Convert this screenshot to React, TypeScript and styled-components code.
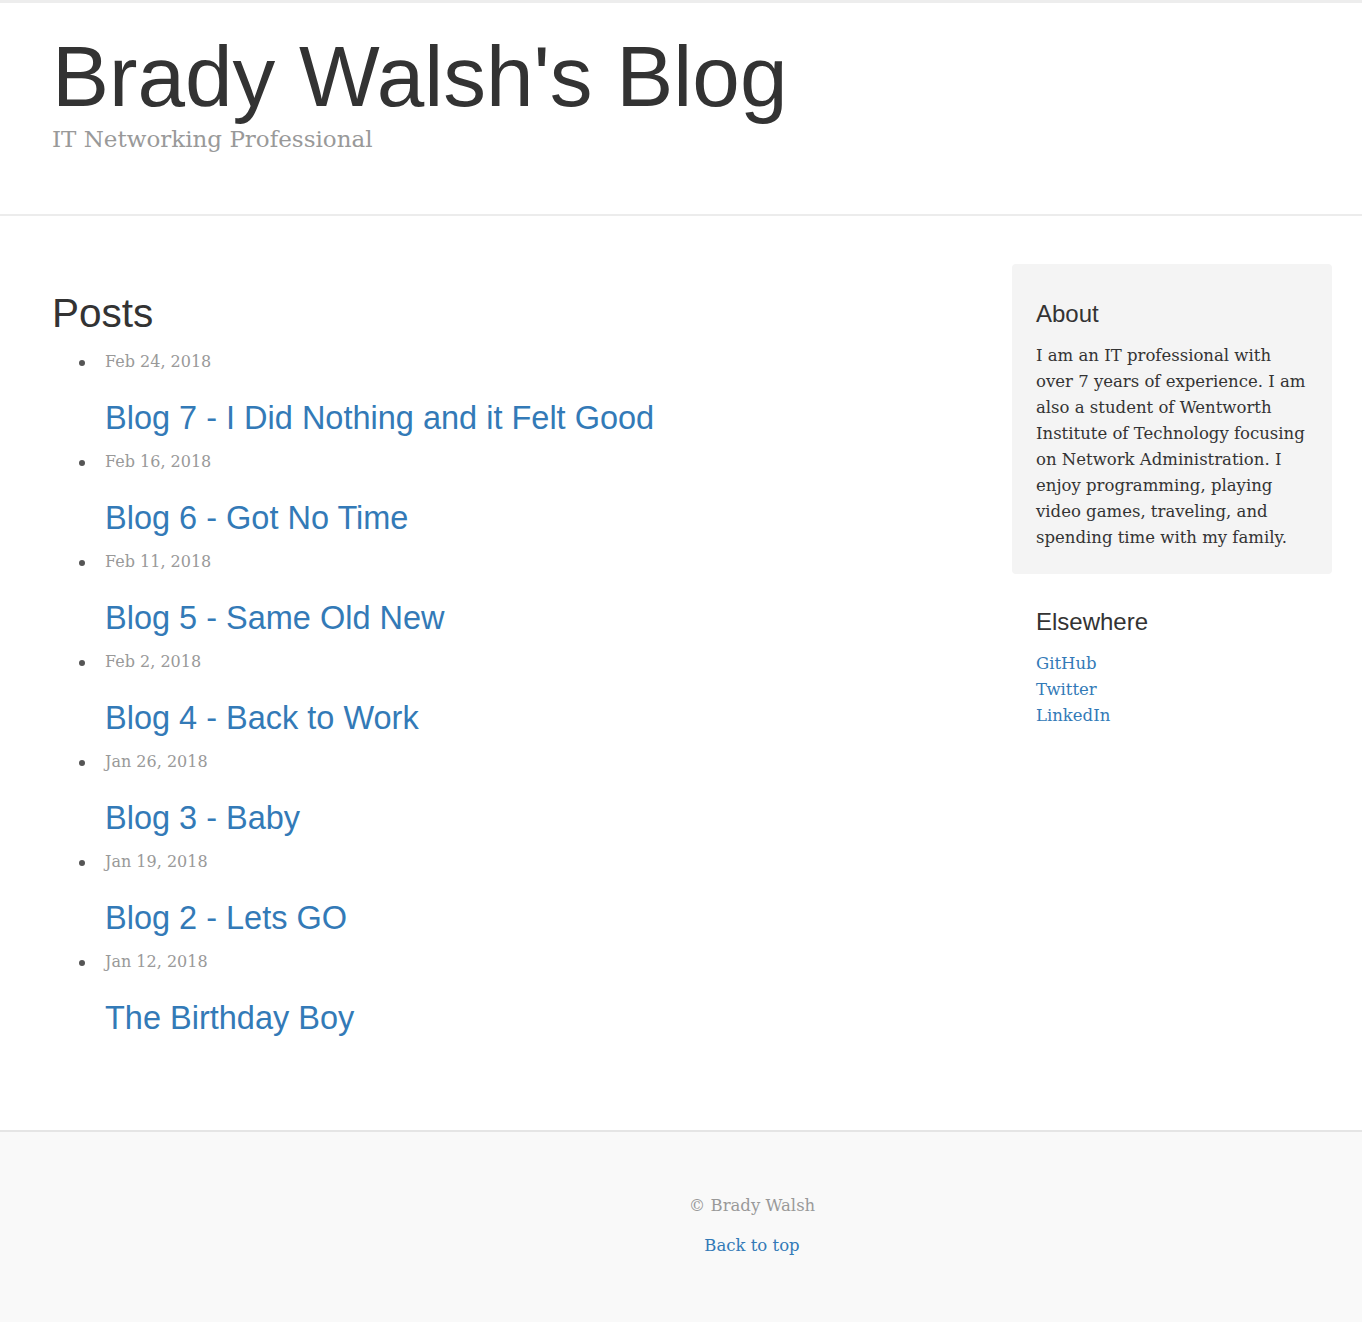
import React from "react";
import styled, { createGlobalStyle } from "styled-components";

const GlobalStyle = createGlobalStyle`
  html, body {
    margin: 0;
    padding: 0;
    background: #ffffff;
  }
  body {
    font-family: "DejaVu Serif", "Liberation Serif", serif;
    color: #333333;
    -webkit-font-smoothing: antialiased;
  }
  * { box-sizing: border-box; }
`;

const sans = `"Liberation Sans", Arial, Helvetica, sans-serif`;
const serif = `"DejaVu Serif", "Liberation Serif", Georgia, serif`;

const Page = styled.div`
  display: flex;
  flex-direction: column;
  min-height: 1322px;
  border-top: 3px solid #ededed;
`;

const Header = styled.header`
  padding: 27px 30px 61px 52px;
  border-bottom: 2px solid #ececec;
`;

const BlogTitle = styled.h1`
  margin: 0;
  font-family: ${sans};
  font-weight: 400;
  font-size: 85.5px;
  line-height: 93.5px;
  color: #333333;
`;

const Tagline = styled.p`
  margin: 2px 0 0;
  font-family: ${serif};
  font-size: 23px;
  line-height: 1.2;
  color: #999999;
`;

const Main = styled.main`
  flex: 1;
  display: grid;
  grid-template-columns: 1fr 320px;
  column-gap: 40px;
  align-items: start;
  padding: 48px 30px 81px 52px;
`;

const PostsColumn = styled.section``;

const SectionTitle = styled.h2`
  margin: 27px 0 0;
  font-family: ${sans};
  font-weight: 400;
  font-size: 40.5px;
  line-height: 44px;
  color: #333333;
`;

const PostList = styled.ul`
  list-style: none;
  margin: 14px 0 0;
  padding: 0 0 0 53px;
`;

const PostItem = styled.li`
  position: relative;
  &::before {
    content: "";
    position: absolute;
    left: -26px;
    top: 11px;
    width: 6px;
    height: 6px;
    border-radius: 50%;
    background: #555555;
  }
`;

const PostDate = styled.span`
  display: block;
  font-family: ${serif};
  font-size: 16px;
  line-height: 26px;
  color: #999999;
`;

const PostTitle = styled.h3`
  margin: 26px 0 13px;
  font-family: ${sans};
  font-weight: 400;
  font-size: 32.5px;
  line-height: 35px;
`;

const Link = styled.a`
  color: #337ab7;
  text-decoration: none;
`;

const Sidebar = styled.aside`
  display: flex;
  flex-direction: column;
  gap: 35px;
`;

const Module = styled.div<{ $inset?: boolean }>`
  padding: ${(p) => (p.$inset ? "37px 24px 23px" : "0 24px")};
  background: ${(p) => (p.$inset ? "#f4f4f4" : "transparent")};
  border-radius: 4px;
`;

const ModuleTitle = styled.h4`
  margin: 0;
  font-family: ${sans};
  font-weight: 400;
  font-size: 24px;
  line-height: 26px;
  color: #333333;
`;

const ModuleText = styled.p`
  margin: 16px 0 0;
  font-family: ${serif};
  font-size: 16.5px;
  line-height: 26px;
  color: #333333;
`;

const LinkList = styled.ol`
  list-style: none;
  margin: 16px 0 0;
  padding: 0;
  font-family: ${serif};
  font-size: 16.5px;
  line-height: 26px;
`;

const Footer = styled.footer`
  padding: 61px 0 63px 142px;
  background: #f9f9f9;
  border-top: 2px solid #e5e5e5;
  text-align: center;
  font-family: ${serif};
  font-size: 16.5px;
  line-height: 26px;
  color: #999999;
`;

const FooterLine = styled.p`
  margin: 0;
  & + & {
    margin-top: 14px;
  }
`;

const posts = [
  { date: "Feb 24, 2018", title: "Blog 7 - I Did Nothing and it Felt Good" },
  { date: "Feb 16, 2018", title: "Blog 6 - Got No Time" },
  { date: "Feb 11, 2018", title: "Blog 5 - Same Old New" },
  { date: "Feb 2, 2018", title: "Blog 4 - Back to Work" },
  { date: "Jan 26, 2018", title: "Blog 3 - Baby" },
  { date: "Jan 19, 2018", title: "Blog 2 - Lets GO" },
  { date: "Jan 12, 2018", title: "The Birthday Boy" },
];

export default function App() {
  return (
    <>
      <GlobalStyle />
      <Page>
        <Header>
          <BlogTitle>Brady Walsh's Blog</BlogTitle>
          <Tagline>IT Networking Professional</Tagline>
        </Header>
        <Main>
          <PostsColumn>
            <SectionTitle>Posts</SectionTitle>
            <PostList>
              {posts.map((p) => (
                <PostItem key={p.title}>
                  <PostDate>{p.date}</PostDate>
                  <PostTitle>
                    <Link href="#">{p.title}</Link>
                  </PostTitle>
                </PostItem>
              ))}
            </PostList>
          </PostsColumn>
          <Sidebar>
            <Module $inset>
              <ModuleTitle>About</ModuleTitle>
              <ModuleText>
                I am an IT professional with over 7 years of experience. I am
                also a student of Wentworth Institute of Technology focusing on
                Network Administration. I enjoy programming, playing video
                games, traveling, and spending time with my family.
              </ModuleText>
            </Module>
            <Module>
              <ModuleTitle>Elsewhere</ModuleTitle>
              <LinkList>
                <li><Link href="#">GitHub</Link></li>
                <li><Link href="#">Twitter</Link></li>
                <li><Link href="#">LinkedIn</Link></li>
              </LinkList>
            </Module>
          </Sidebar>
        </Main>
        <Footer>
          <FooterLine>© Brady Walsh</FooterLine>
          <FooterLine>
            <Link href="#">Back to top</Link>
          </FooterLine>
        </Footer>
      </Page>
    </>
  );
}
